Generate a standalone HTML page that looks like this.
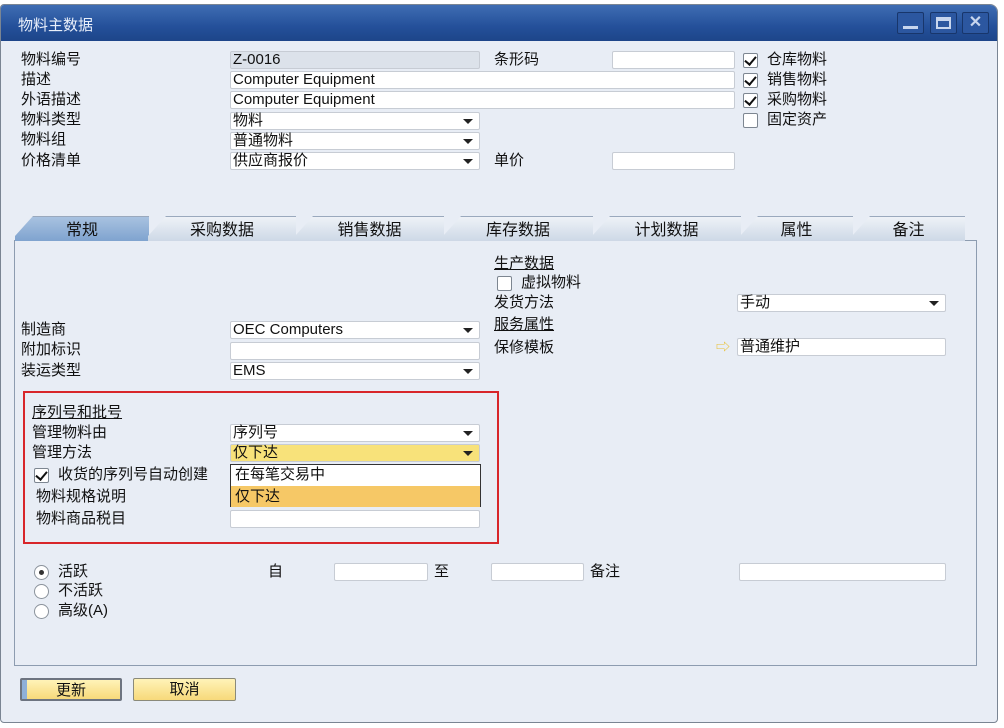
<!DOCTYPE html>
<html><head><meta charset="utf-8"><style>
*{margin:0;padding:0;box-sizing:border-box}
body{width:1004px;height:728px;background:#fff;position:relative;overflow:hidden;font-family:"Liberation Sans","Noto Sans CJK SC",sans-serif;font-size:15px;color:#111}
.win{position:absolute;left:0;top:4px;width:998px;height:719px;background:#e8edf5;border:1px solid #7a8593;border-radius:4px 8px 4px 4px;overflow:hidden}
.tb{position:absolute;left:0;top:0;width:100%;height:36px;background:linear-gradient(#3f6db3,#24509a 60%,#1d4589)}
.tb span{position:absolute;left:17px;top:9px;color:#e9effa;font-size:15px}
.wb{position:absolute;top:7px;width:27px;height:22px;border:1px solid #18366b;background:#2c57a0;border-radius:2px}
.a{position:absolute;white-space:nowrap;line-height:18px}
.f{position:absolute;height:18px;background:#fff;border:1px solid #c7ccd4;border-radius:2px;line-height:16px;padding-left:2px;font-size:15px;white-space:nowrap}
.f.s::after{content:"";position:absolute;right:6px;top:6px;border-left:5px solid transparent;border-right:5px solid transparent;border-top:5px solid #222}
.c{position:absolute;width:15px;height:15px;border:1px solid #7d8691;background:#fff;border-radius:2px}
.c.k::after{content:"";position:absolute;left:3px;top:0px;width:5px;height:9px;border:solid #111;border-width:0 2.5px 2.5px 0;transform:rotate(40deg)}
.r{position:absolute;width:15px;height:15px;border:1px solid #8b939c;background:#fff;border-radius:50%}
.u{text-decoration:underline}
.tab{position:absolute;top:216px;height:25px;background:linear-gradient(#eef2f7,#cdd8e6);clip-path:polygon(18px 0,100% 0,100% 100%,0 100%,0 20px);text-align:center;line-height:27px;font-size:16px;border-top:1px solid #9aa9bd}
.btn{position:absolute;top:678px;height:23px;background:linear-gradient(#fff3b8,#f7d97a);border:1px solid #8a8a7a;border-radius:2px;text-align:center;line-height:21px}
</style></head><body>
<div class="win">
<div class="tb"><span>物料主数据</span>
<div class="wb" style="left:896px"><div style="position:absolute;left:5px;top:13px;width:15px;height:3px;background:#c8d6ee"></div></div>
<div class="wb" style="left:929px"><div style="position:absolute;left:5px;top:4px;width:15px;height:12px;border:2px solid #c8d6ee;border-top-width:4px"></div></div>
<div class="wb" style="left:961px;color:#c8d6ee;font-weight:bold;text-align:center;line-height:20px;font-size:16px">✕</div>
</div>
</div>
<div class="a" style="left:21px;top:51px">物料编号</div>
<div class="a" style="left:21px;top:71px">描述</div>
<div class="a" style="left:21px;top:91px">外语描述</div>
<div class="a" style="left:21px;top:111px">物料类型</div>
<div class="a" style="left:21px;top:131px">物料组</div>
<div class="a" style="left:21px;top:152px">价格清单</div>
<div class="f" style="left:230px;top:51px;width:250px;background:#dce2ea">Z-0016</div>
<div class="f" style="left:230px;top:71px;width:505px">Computer Equipment</div>
<div class="f" style="left:230px;top:91px;width:505px">Computer Equipment</div>
<div class="f s" style="left:230px;top:112px;width:250px">物料</div>
<div class="f s" style="left:230px;top:132px;width:250px">普通物料</div>
<div class="f s" style="left:230px;top:152px;width:250px">供应商报价</div>
<div class="a" style="left:494px;top:51px">条形码</div>
<div class="f" style="left:612px;top:51px;width:123px"></div>
<div class="a" style="left:494px;top:152px">单价</div>
<div class="f" style="left:612px;top:152px;width:123px"></div>
<div class="c k" style="left:743px;top:53px"></div><div class="a" style="left:767px;top:51px">仓库物料</div>
<div class="c k" style="left:743px;top:73px"></div><div class="a" style="left:767px;top:71px">销售物料</div>
<div class="c k" style="left:743px;top:93px"></div><div class="a" style="left:767px;top:91px">采购物料</div>
<div class="c" style="left:743px;top:113px"></div><div class="a" style="left:767px;top:111px">固定资产</div>

<div style="position:absolute;left:14px;top:240px;width:963px;height:426px;border:1px solid #8d9cb0;background:#e8edf5"></div>
<div class="tab" style="left:15px;width:134px;background:linear-gradient(#a8c2e0,#7fa3cf)">常规</div>
<div class="tab" style="left:148px;width:148px">采购数据</div>
<div class="tab" style="left:295px;width:149px">销售数据</div>
<div class="tab" style="left:443px;width:150px">库存数据</div>
<div class="tab" style="left:592px;width:149px">计划数据</div>
<div class="tab" style="left:740px;width:113px">属性</div>
<div class="tab" style="left:852px;width:113px">备注</div>

<div class="a u" style="left:494px;top:255px">生产数据</div>
<div class="c" style="left:497px;top:276px"></div><div class="a" style="left:521px;top:274px">虚拟物料</div>
<div class="a" style="left:494px;top:294px">发货方法</div>
<div class="f s" style="left:737px;top:294px;width:209px">手动</div>
<div class="a u" style="left:494px;top:316px">服务属性</div>
<div class="a" style="left:494px;top:339px">保修模板</div>
<div class="a" style="left:716px;top:338px;color:#e8c030;font-size:14px">⇨</div>
<div class="f" style="left:737px;top:338px;width:209px">普通维护</div>

<div class="a" style="left:21px;top:321px">制造商</div>
<div class="a" style="left:21px;top:341px">附加标识</div>
<div class="a" style="left:21px;top:362px">装运类型</div>
<div class="f s" style="left:230px;top:321px;width:250px">OEC Computers</div>
<div class="f" style="left:230px;top:342px;width:250px"></div>
<div class="f s" style="left:230px;top:362px;width:250px">EMS</div>

<div style="position:absolute;left:23px;top:391px;width:476px;height:153px;border:2px solid #d8262a"></div>
<div class="a u" style="left:32px;top:404px">序列号和批号</div>
<div class="a" style="left:32px;top:424px">管理物料由</div>
<div class="a" style="left:32px;top:444px">管理方法</div>
<div class="f s" style="left:230px;top:424px;width:250px">序列号</div>
<div class="f s" style="left:230px;top:444px;width:250px;background:#f8e27a">仅下达</div>
<div class="c k" style="left:34px;top:468px"></div><div class="a" style="left:58px;top:466px;width:172px;overflow:hidden">收货的序列号自动创建</div>
<div class="a" style="left:36px;top:488px">物料规格说明</div>
<div class="a" style="left:36px;top:510px">物料商品税目</div>
<div class="f" style="left:230px;top:510px;width:250px"></div>
<div style="position:absolute;left:230px;top:464px;width:251px;height:43px;border:1px solid #333;background:#fff">
<div class="a" style="left:4px;top:1px">在每笔交易中</div>
<div style="position:absolute;left:0;top:21px;width:100%;height:21px;background:#f6c866"></div>
<div class="a" style="left:4px;top:23px">仅下达</div>
</div>

<div class="r" style="left:34px;top:565px"><div style="position:absolute;left:4px;top:4px;width:5px;height:5px;border-radius:50%;background:#333"></div></div>
<div class="a" style="left:58px;top:563px">活跃</div>
<div class="r" style="left:34px;top:584px"></div><div class="a" style="left:58px;top:582px">不活跃</div>
<div class="r" style="left:34px;top:604px"></div><div class="a" style="left:58px;top:602px">高级(A)</div>
<div class="a" style="left:268px;top:563px">自</div>
<div class="f" style="left:334px;top:563px;width:94px"></div>
<div class="a" style="left:434px;top:563px">至</div>
<div class="f" style="left:491px;top:563px;width:93px"></div>
<div class="a" style="left:590px;top:563px">备注</div>
<div class="f" style="left:739px;top:563px;width:207px"></div>

<div class="btn" style="left:20px;width:102px;border:2px solid #6d7480;box-shadow:inset 5px 0 0 #8fb0d8">更新</div>
<div class="btn" style="left:133px;width:103px">取消</div>
</body></html>
